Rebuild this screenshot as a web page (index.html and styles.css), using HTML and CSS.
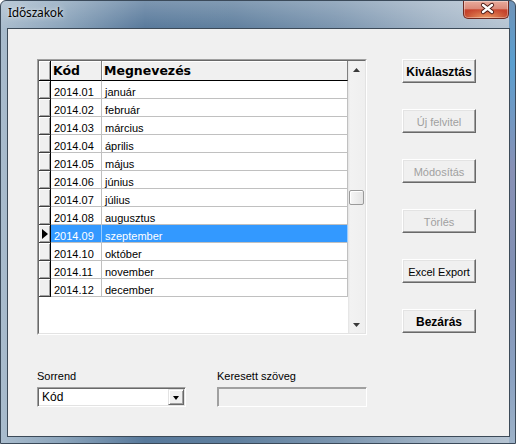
FILE: index.html
```html
<!DOCTYPE html>
<html lang="hu">
<head>
<meta charset="utf-8">
<title>Időszakok</title>
<link rel="stylesheet" href="styles.css">
</head>
<body>
<div class="window">
  <div class="titlebar">
    <span class="title">Időszakok</span>
    <div class="close">
      <svg width="44" height="17" viewBox="0 0 44 17">
        <path d="M19 4 L28 11 M28 4 L19 11" stroke="#4a1a14" stroke-width="4.2" stroke-linecap="round" fill="none"/>
        <path d="M19 4 L28 11 M28 4 L19 11" stroke="#fff" stroke-width="2.4" stroke-linecap="round" fill="none"/>
      </svg>
    </div>
  </div>
  <div class="client">
    <div class="main">
      <div class="datagrid">
        <div class="dg-inner">
          <div class="dg-table">
            <div class="ind hd-ind"></div>
            <div class="hd">Kód</div>
            <div class="hd hd-last">Megnevezés</div>

            <div class="ind"></div><div class="c">2014.01</div><div class="c">január</div>
            <div class="ind"></div><div class="c">2014.02</div><div class="c">február</div>
            <div class="ind"></div><div class="c">2014.03</div><div class="c">március</div>
            <div class="ind"></div><div class="c">2014.04</div><div class="c">április</div>
            <div class="ind"></div><div class="c">2014.05</div><div class="c">május</div>
            <div class="ind"></div><div class="c">2014.06</div><div class="c">június</div>
            <div class="ind"></div><div class="c">2014.07</div><div class="c">július</div>
            <div class="ind"></div><div class="c">2014.08</div><div class="c">augusztus</div>
            <div class="ind cur"><span class="tri"></span></div><div class="c sel">2014.09</div><div class="c sel">szeptember</div>
            <div class="ind"></div><div class="c">2014.10</div><div class="c">október</div>
            <div class="ind"></div><div class="c">2014.11</div><div class="c">november</div>
            <div class="ind"></div><div class="c">2014.12</div><div class="c">december</div>
          </div>
          <div class="sb">
            <div class="sb-btn">
              <svg width="7" height="4" viewBox="0 0 7 4"><path d="M0 4 L3.5 0 L7 4 Z" fill="#3a3a3a"/></svg>
            </div>
            <div class="sb-track"><div class="sb-thumb"></div></div>
            <div class="sb-btn">
              <svg width="7" height="4" viewBox="0 0 7 4"><path d="M0 0 L7 0 L3.5 4 Z" fill="#3a3a3a"/></svg>
            </div>
          </div>
        </div>
      </div>
      <div class="filters">
        <div class="field">
          <span class="lbl">Sorrend</span>
          <div class="select">
            <span class="sel-text">Kód</span>
            <span class="dd-btn"><span class="dd-arrow"></span></span>
          </div>
        </div>
        <div class="field">
          <span class="lbl">Keresett szöveg</span>
          <div class="textbox"></div>
        </div>
      </div>
    </div>
    <div class="buttons">
      <div class="btn bold">Kiválasztás</div>
      <div class="btn disabled">Új felvitel</div>
      <div class="btn disabled">Módosítás</div>
      <div class="btn disabled">Törlés</div>
      <div class="btn">Excel Export</div>
      <div class="btn bold">Bezárás</div>
    </div>
  </div>
</div>
</body>
</html>
```
FILE: styles.css
```css
* { box-sizing: border-box; }

html, body {
  margin: 0;
  padding: 0;
  width: 516px;
  height: 444px;
  overflow: hidden;
  font-family: "Liberation Sans", Arial, sans-serif;
}

.window {
  width: 516px;
  height: 444px;
  display: flex;
  flex-direction: column;
  border: 1px solid #3b4a5a;
  border-radius: 6px 6px 0 0;
  padding: 0 5px 6px 6px;
  background:
    linear-gradient(180deg, #6f93b8 0%, #5a9fd0 14%, #8891b6 38%, #8290b4 60%, #8ba2c2 85%, #9db2c8 100%) right top / 6px 100% no-repeat,
    linear-gradient(180deg, rgba(255,255,255,0.22) 0px, rgba(255,255,255,0) 28px),
    linear-gradient(90deg, #a9bccd 0%, #8ba4bb 12%, #58799b 28%, #5f7f9e 45%, #7b95af 65%, #a2b4c6 85%, #b7c5d3 100%);
}

.titlebar {
  height: 27px;
  display: flex;
  align-items: flex-start;
}

.title {
  padding: 4px 0 0 1px;
  font-family: "Noto Sans", "Open Sans", sans-serif;
  font-size: 12px;
  line-height: 16px;
  letter-spacing: -0.2px;
  color: #000;
  text-shadow: 0 0 6px rgba(255,255,255,0.75), 0 0 3px rgba(255,255,255,0.5);
}

.close {
  margin-left: auto;
  margin-right: 1px;
  width: 46px;
  height: 18px;
  border: 1px solid #6e2a22;
  border-top: none;
  border-radius: 0 0 5px 5px;
  background:
    radial-gradient(ellipse 60% 55% at 50% 100%, rgba(245,170,110,0.9) 0%, rgba(245,170,110,0) 100%),
    linear-gradient(180deg, #e9ab9c 0%, #dc8a7a 45%, #c8462f 52%, #b9331f 100%);
  box-shadow: inset 0 0 0 1px rgba(255,255,255,0.35);
  display: flex;
}

.client {
  flex: 1;
  border: 1px solid #3c4a58;
  background: #f0f0f0;
  display: flex;
  padding: 30px 0 0 29px;
  gap: 35px;
}

.main {
  width: 330px;
  display: flex;
  flex-direction: column;
}

/* Data grid */
.datagrid {
  height: 276px;
  border: 1px solid;
  border-color: #a0a0a0 #ffffff #ffffff #a0a0a0;
}

.dg-inner {
  height: 100%;
  border: 1px solid;
  border-color: #696969 #e3e3e3 #e3e3e3 #696969;
  background: #fff;
  display: flex;
}

.dg-table {
  width: 309px;
  display: grid;
  grid-template-columns: 12px 51px 246px;
  grid-template-rows: 20px;
  grid-auto-rows: 18px;
  align-content: start;
}

.ind {
  background: #f0f0f0;
  border-right: 1px solid #000;
  border-bottom: 1px solid #404040;
  box-shadow: inset 1px 1px #ffffff, inset -1px -1px #a0a0a0;
  display: flex;
  align-items: center;
  padding-left: 3px;
}

.hd-ind {
  border-bottom: 1px solid #000;
}

.tri {
  width: 0;
  height: 0;
  border-left: 6px solid #000;
  border-top: 5px solid transparent;
  border-bottom: 5px solid transparent;
}

.hd {
  background: #f0f0f0;
  border-bottom: 1px solid #000;
  border-right: 1px solid #808080;
  box-shadow: inset 1px 1px #ffffff;
  padding: 1px 0 0 2px;
  font-family: "DejaVu Sans", Verdana, sans-serif;
  font-weight: bold;
  font-size: 12.5px;
  line-height: 18px;
  color: #000;
  white-space: nowrap;
}

.c {
  border-right: 1px solid #c0c0c0;
  border-bottom: 1px solid #c0c0c0;
  padding: 5px 0 0 3px;
  font-size: 11px;
  line-height: 12px;
  color: #000;
  white-space: nowrap;
}

.c.sel {
  background: #3399ff;
  color: #fff;
  border-right-color: #99ccff;
}

/* Scrollbar */
.sb {
  width: 17px;
  display: flex;
  flex-direction: column;
  background: linear-gradient(90deg, #e2e2e2 0px, #f2f2f2 2px, #efefef 100%);
}

.sb-btn {
  height: 17px;
  display: flex;
  align-items: center;
  justify-content: center;
}

.sb-track {
  flex: 1;
  padding-top: 112px;
}

.sb-thumb {
  height: 15px;
  margin-left: 1px;
  width: 15px;
  border: 1px solid #9a9a9a;
  border-radius: 2px;
  background: linear-gradient(90deg, #f6f6f6, #e4e4e4);
  box-shadow: inset 1px 1px #ffffff;
}

/* Filters */
.filters {
  display: flex;
  gap: 31px;
  margin-top: 35px;
}

.field {
  display: flex;
  flex-direction: column;
  gap: 4px;
}

.lbl {
  font-size: 11px;
  line-height: 13px;
  color: #000;
  white-space: nowrap;
}

.select {
  width: 149px;
  height: 20px;
  border: 1px solid;
  border-color: #a0a0a0 #ffffff #ffffff #a0a0a0;
  box-shadow: inset 1px 1px #696969, inset -1px -1px #e3e3e3;
  padding: 1px;
  background: #fff;
  display: flex;
}

.sel-text {
  flex: 1;
  padding-left: 3px;
  font-size: 12px;
  line-height: 16px;
  color: #000;
}

.dd-btn {
  width: 16px;
  height: 16px;
  border: 1px solid;
  border-color: #e3e3e3 #696969 #696969 #e3e3e3;
  box-shadow: inset 1px 1px #ffffff, inset -1px -1px #a0a0a0;
  background: #f0f0f0;
  display: flex;
  align-items: center;
  justify-content: center;
}

.dd-arrow {
  width: 0;
  height: 0;
  border-top: 4px solid #000;
  border-left: 3.5px solid transparent;
  border-right: 3.5px solid transparent;
  margin-top: 1px;
}

.textbox {
  width: 150px;
  height: 20px;
  border: 1px solid;
  border-color: #a0a0a0 #ffffff #ffffff #a0a0a0;
  box-shadow: inset 1px 1px #a0a0a0, inset -1px -1px #f0f0f0;
  background: #f0f0f0;
}

/* Buttons */
.buttons {
  width: 74px;
  display: flex;
  flex-direction: column;
  gap: 26px;
}

.btn {
  height: 24px;
  border: 1px solid;
  border-color: #ffffff #696969 #696969 #ffffff;
  box-shadow: inset -1px -1px #a0a0a0, inset 1px 1px #e3e3e3;
  background: #f0f0f0;
  display: flex;
  align-items: center;
  justify-content: center;
  padding-top: 1px;
  font-size: 11px;
  color: #000;
  white-space: nowrap;
}

.btn.bold {
  font-weight: bold;
  font-size: 12px;
}

.btn.disabled {
  color: #a0a0a0;
}
```
